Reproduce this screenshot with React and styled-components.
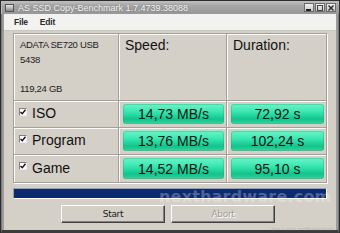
import React from "react";
import styled, { createGlobalStyle } from "styled-components";

const Global = createGlobalStyle`
  html, body { margin: 0; padding: 0; overflow: hidden; background: #fff; }
  * { box-sizing: border-box; }
`;

const Window = styled.div`
  position: relative;
  width: 340px;
  height: 233px;
  display: flex;
  flex-direction: column;
  background: #5a5a5a;
  border: 1px solid #2c2c2c;
  border-bottom: 0;
  font-family: "Liberation Sans", Arial, sans-serif;
  overflow: hidden;
`;

const TitleBar = styled.div`
  height: 13px;
  display: flex;
  align-items: center;
  padding: 0 3px 0 3px;
  background: linear-gradient(#c0c0c0, #a4a4a4 40%, #979797);
  border-left: 1px solid #bdbdbd;
`;

const TitleIcon = styled.div`
  width: 9px;
  height: 8px;
  margin-right: 4px;
  background: linear-gradient(#e6e6e6, #8a8a8a);
  border: 1px solid #555;
`;

const TitleText = styled.div`
  flex: 1;
  font-size: 9px;
  color: #f4f4f4;
  text-shadow: 0 0 2px #6a6a6a;
  white-space: nowrap;
`;

const Controls = styled.div`
  display: flex;
  gap: 1px;
`;

const CtlBtn = styled.div`
  width: 10px;
  height: 9px;
  background: linear-gradient(#f2f2f2, #c8c8c8);
  border: 1px solid #6c6c6c;
  display: flex;
  align-items: center;
  justify-content: center;
`;

const Frame = styled.div`
  flex: 1;
  display: flex;
  flex-direction: column;
  padding: 0 2px 0 2px;
  background: #9c9c9c;
  border-left: 1px solid #777;
  border-right: 1px solid #777;
  border-bottom: 3px solid #3c3c3c;
`;

const MenuBar = styled.div`
  height: 17px;
  display: flex;
  align-items: center;
  gap: 12px;
  padding-left: 10px;
  background: #f2f2f0;
  border-bottom: 1px solid #c8c6c0;
`;

const MenuItem = styled.span`
  font-size: 8.5px;
  font-weight: bold;
  color: #2a2a2a;
  letter-spacing: -0.2px;
`;

const Client = styled.div`
  flex: 1;
  display: flex;
  flex-direction: column;
  background: #d4d0c8;
  padding: 2px 9px 0 9px;
`;

const Table = styled.div`
  display: grid;
  grid-template-columns: 105px 108px 1fr;
  grid-template-rows: 67px 27px 27px 28px;
  border-top: 1px solid #a3a09a;
  border-left: 1px solid #a3a09a;
  box-shadow: 1px 1px 0 #fff;
`;

const Cell = styled.div`
  border-right: 1px solid #a3a09a;
  border-bottom: 1px solid #a3a09a;
  box-shadow: inset 1px 1px 0 #fbfbf9;
  display: flex;
`;

const InfoCell = styled(Cell)`
  flex-direction: column;
  padding: 5px 0 0 6px;
  font-size: 9.5px;
  letter-spacing: -0.3px;
  color: #1c1c1c;
`;

const InfoLine = styled.div`
  height: ${(p) => p.$h}px;
  line-height: 11px;
`;

const HeadCell = styled(Cell)`
  padding: 3px 0 0 6px;
  font-size: 14px;
  color: #111;
`;

const LabelCell = styled(Cell)`
  align-items: center;
  padding: 0 0 2px 5px;
  font-size: 14px;
  color: #111;
  gap: 5px;
`;

const Check = styled.div`
  width: 8px;
  height: 8px;
  background: #fff;
  border-top: 1px solid #808080;
  border-left: 1px solid #808080;
  border-right: 1px solid #eee;
  border-bottom: 1px solid #eee;
  display: flex;
  align-items: center;
  justify-content: center;
  margin-top: -3px;
`;

const ValueCell = styled(Cell)`
  padding: 3px 2px 3px 4px;
`;

const ValueBox = styled.div`
  flex: 1;
  border-radius: 3px;
  display: flex;
  align-items: center;
  justify-content: center;
  font-size: 14px;
  color: #151515;
  background: linear-gradient(
    #6cf3c8 0%,
    #3fe8b2 35%,
    #26d9a0 55%,
    #14c38b 75%,
    #1ccd94 88%,
    #3ddfab 100%
  );
  box-shadow: inset 0 0 0 1px rgba(20, 170, 120, 0.35);
`;

const Progress = styled.div`
  margin-top: 5px;
  height: 11px;
  border-top: 1px solid #a3a09a;
  border-left: 1px solid #a3a09a;
  border-right: 1px solid #fff;
  border-bottom: 1px solid #fff;
  background: #0b2a70;
`;

const Buttons = styled.div`
  margin-top: 6px;
  display: flex;
  justify-content: center;
  gap: 6px;
  padding-right: 4px;
`;

const Button = styled.div`
  width: 104px;
  height: 18px;
  display: flex;
  align-items: center;
  justify-content: center;
  font-size: 9px;
  font-family: "DejaVu Sans", sans-serif;
  letter-spacing: -0.3px;
  background: #d4d0c8;
  border-top: 1px solid #fff;
  border-left: 1px solid #fff;
  border-right: 1px solid #404040;
  border-bottom: 1px solid #404040;
  box-shadow: inset -1px -1px 0 #808080;
  color: ${(p) => (p.$disabled ? "#a09d96" : "#1a1a1a")};
  text-shadow: ${(p) => (p.$disabled ? "1px 1px 0 #fff" : "none")};
`;

const Watermark = styled.div`
  position: absolute;
  left: 150px;
  top: 186px;
  width: 185px;
  pointer-events: none;
  color: rgba(255, 255, 255, 0.28);
  font-family: "DejaVu Sans", sans-serif;
`;

const WmBig = styled.div`
  font-size: 16px;
  font-weight: bold;
  letter-spacing: 0.2px;
  padding-left: 8px;
`;

const WmSmall = styled.div`
  font-size: 5.5px;
  text-align: right;
  margin-top: 20px;
  padding-right: 2px;
  color: rgba(110, 110, 110, 0.35);
`;

const CheckMark = () => (
  <svg width="6" height="6" viewBox="0 0 6 6">
    <path d="M0.5 3 L2.3 4.8 L5.5 0.8" stroke="#111" strokeWidth="1.4" fill="none" />
  </svg>
);

const rows = [
  { name: "ISO", speed: "14,73 MB/s", dur: "72,92 s" },
  { name: "Program", speed: "13,76 MB/s", dur: "102,24 s" },
  { name: "Game", speed: "14,52 MB/s", dur: "95,10 s" },
];

export default function App() {
  return (
    <>
      <Global />
      <Window>
        <TitleBar>
          <TitleIcon />
          <TitleText>AS SSD Copy-Benchmark 1.7.4739.38088</TitleText>
          <Controls>
            <CtlBtn>
              <svg width="6" height="6" viewBox="0 0 6 6">
                <rect x="0" y="4" width="5" height="2" fill="#222" />
              </svg>
            </CtlBtn>
            <CtlBtn>
              <svg width="6" height="6" viewBox="0 0 6 6">
                <rect x="0.5" y="0.5" width="5" height="5" fill="none" stroke="#444" strokeWidth="1" />
              </svg>
            </CtlBtn>
            <CtlBtn>
              <svg width="6" height="6" viewBox="0 0 6 6">
                <path d="M0.5 0.5 L5.5 5.5 M5.5 0.5 L0.5 5.5" stroke="#222" strokeWidth="1.3" />
              </svg>
            </CtlBtn>
          </Controls>
        </TitleBar>
        <Frame>
          <MenuBar>
            <MenuItem>File</MenuItem>
            <MenuItem>Edit</MenuItem>
          </MenuBar>
          <Client>
            <Table>
              <InfoCell>
                <InfoLine $h={15}>ADATA SE720 USB</InfoLine>
                <InfoLine $h={29}>5438</InfoLine>
                <InfoLine $h={11}>119,24 GB</InfoLine>
              </InfoCell>
              <HeadCell>Speed:</HeadCell>
              <HeadCell>Duration:</HeadCell>
              {rows.map((r) => (
                <React.Fragment key={r.name}>
                  <LabelCell>
                    <Check>
                      <CheckMark />
                    </Check>
                    {r.name}
                  </LabelCell>
                  <ValueCell>
                    <ValueBox>{r.speed}</ValueBox>
                  </ValueCell>
                  <ValueCell>
                    <ValueBox>{r.dur}</ValueBox>
                  </ValueCell>
                </React.Fragment>
              ))}
            </Table>
            <Progress />
            <Buttons>
              <Button>Start</Button>
              <Button $disabled>Abort</Button>
            </Buttons>
          </Client>
        </Frame>
        <Watermark>
          <WmBig>nexthardware.com</WmBig>
          <WmSmall>per i veri professionisti</WmSmall>
        </Watermark>
      </Window>
    </>
  );
}
